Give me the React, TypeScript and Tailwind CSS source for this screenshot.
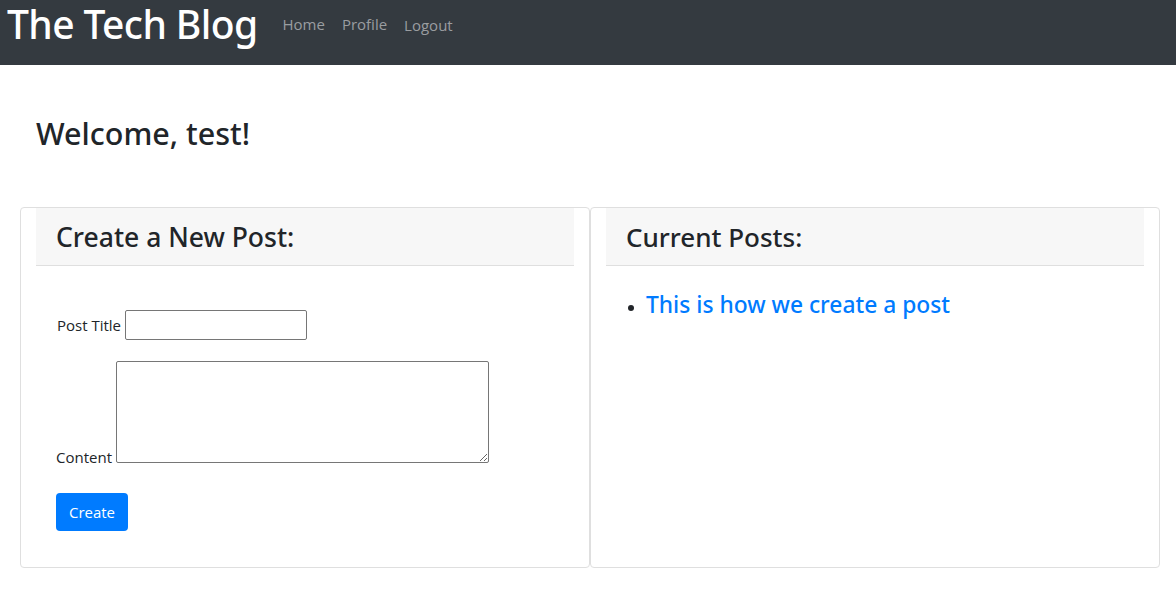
import React from "react";

export default function App() {
  return (
    <div className="min-h-[590px] bg-white text-[#212529] font-['Open_Sans',sans-serif]">
      <nav className="h-[65px] bg-[#343a40] flex items-start px-[7px]">
        <a className="text-[39px] leading-[48px] font-['Noto_Sans',sans-serif] font-medium text-white tracking-[-0.6px]">The Tech Blog</a>
        <div className="flex items-start ml-[25px] mt-[12px] text-[15px] text-[#9a9da0]">
          <a className="mr-[17px] leading-[24px]">Home</a>
          <a className="mr-[17px] leading-[24px]">Profile</a>
          <button className="leading-[24px] mt-[1px]">Logout</button>
        </div>
      </nav>
      <main className="px-[20px]">
        <h2 className="text-[30.5px] leading-[38px] font-['Noto_Sans',sans-serif] font-medium pl-[16px] pt-[49px] pb-[55px]">Welcome, test!</h2>
        <div className="flex">
          <section className="w-[570px] shrink-0 h-[361px] border border-[#dfdfdf] rounded-[4px] px-[15px]">
            <div className="h-[58px] bg-[#f7f7f7] border-b border-[#dfdfdf] flex items-center px-[20px]">
              <h3 className="text-[26.5px] leading-[34px] font-['Noto_Sans',sans-serif] font-medium">Create a New Post:</h3>
            </div>
            <form className="px-[20px] pt-[44px] text-[15px]">
              <div className="flex items-center">
                <label className="mr-[4px] ml-[1px]">Post Title</label>
                <input type="text" className="w-[182px] h-[30px] border border-[#767676] rounded-[2px]" />
              </div>
              <div className="mt-[21px] leading-[20px]">
                <label className="mr-[4px]">Content</label>
                <textarea className="w-[373px] h-[102px] border border-[#767676] rounded-[2px] align-baseline resize" />
              </div>
              <button type="button" className="mt-[26px] w-[72px] h-[38px] bg-[#007bff] rounded-[4px] text-white text-[15px]">Create</button>
            </form>
          </section>
          <section className="w-[570px] shrink-0 h-[361px] border border-[#dfdfdf] rounded-[4px] px-[15px]">
            <div className="h-[58px] bg-[#f7f7f7] border-b border-[#dfdfdf] flex items-center px-[20px]">
              <h3 className="text-[26px] leading-[34px] font-['Noto_Sans',sans-serif] font-medium">Current Posts:</h3>
            </div>
            <ul className="list-disc pl-[40px] mt-[23px]">
              <li className="text-[22.8px] leading-[32px] font-['Noto_Sans',sans-serif] font-medium marker:text-[#212529] marker:text-[16px]">
                <a className="text-[#007bff]">This is how we create a post</a>
              </li>
            </ul>
          </section>
        </div>
      </main>
    </div>
  );
}
